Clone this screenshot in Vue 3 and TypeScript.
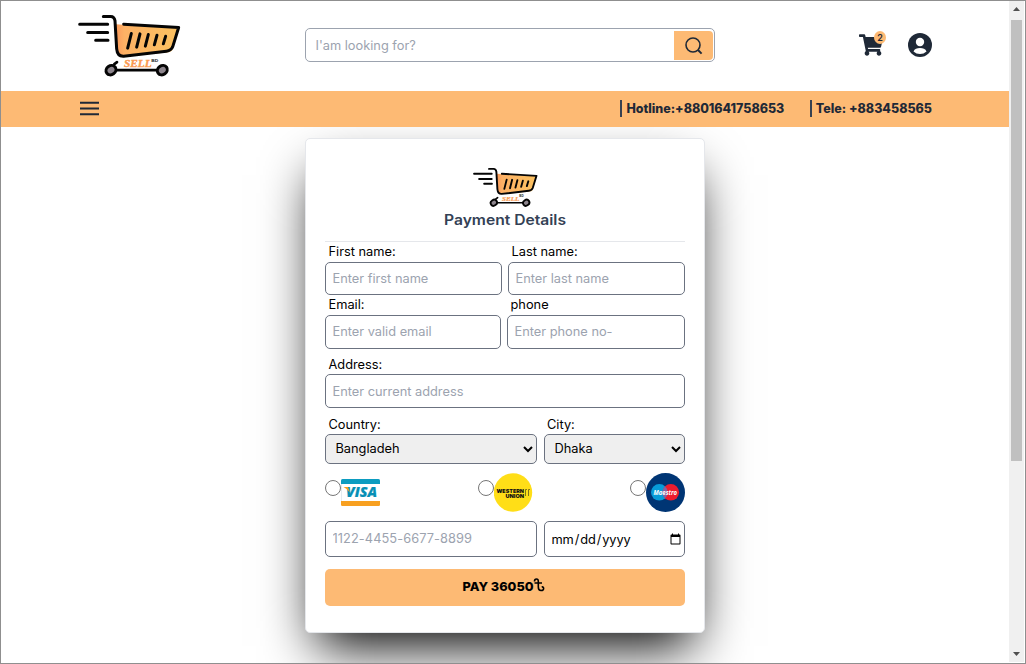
<script setup lang="ts">
import { ref } from 'vue'

interface Contact {
  label: string
  kind: string
}

const contacts: Contact[] = [
  { label: 'Hotline:+8801641758653', kind: 'hotline' },
  { label: 'Tele: +883458565', kind: 'tele' },
]
const cartCount = ref(2)
const total = ref(36050)
const country = ref('Bangladeh')
const city = ref('Dhaka')
const method = ref('')
</script>

<template>
  <div class="window">
    <svg class="defs" aria-hidden="true">
      <defs>
        <linearGradient id="basket" x1="0" y1="0" x2="1" y2="0">
          <stop offset="0" stop-color="#fb9a5c" />
          <stop offset="0.14" stop-color="#fdb165" />
          <stop offset="1" stop-color="#fbc160" />
        </linearGradient>
        <symbol id="logo" viewBox="50 40 315 195">
          <path d="M166 72L356 84L336 150Q332 156 320 157L190 169Q174 170 170 154Z" fill="url(#basket)" />
          <g fill="none" stroke="#050505" stroke-width="9" stroke-linecap="round" stroke-linejoin="round">
            <path d="M58 72H142M82 97H142M106 120H143" />
            <path d="M129 49H151Q162 49 164 62L169 146Q171 169 190 168L318 153Q333 151 337 140L355 82L190 72" />
            <path d="M213 100L202 144M239 101L229 141M264 103L255 138M290 105L282 134M316 108L309 131" />
            <path d="M162 192L170 186M168 210H290" stroke-width="8" />
          </g>
          <g fill="#8d858d" stroke="#050505" stroke-width="9">
            <ellipse cx="152" cy="210" rx="15.500" ry="13.500" transform="rotate(-35 152 210)" />
            <ellipse cx="306" cy="210" rx="15.500" ry="13.500" transform="rotate(-35 306 210)" />
          </g>
          <text x="191" y="202" textLength="83" lengthAdjust="spacingAndGlyphs" class="logo-name">SELL</text>
          <text x="273" y="185" textLength="21" lengthAdjust="spacingAndGlyphs" class="logo-bd">BD</text>
        </symbol>
      </defs>
    </svg>

    <div class="page">
      <header class="top">
        <svg class="brand"><use href="#logo" /></svg>
        <div class="search">
          <input type="text" placeholder="I'am looking for?" />
          <button type="button" aria-label="Search">
            <svg width="20" height="20" viewBox="0 0 20 20" fill="none" stroke="#1f2937" stroke-width="1.6">
              <circle cx="9" cy="9" r="7" />
              <path d="M14 14L17.6 17.6" stroke-width="2" />
            </svg>
          </button>
        </div>
        <div class="actions">
          <div class="cart">
            <svg width="24" height="22" viewBox="0 0 576 512" fill="#1f2937">
              <path d="M528.12 301.319l47.273-208C578.806 78.301 567.391 64 551.99 64H159.208l-9.166-44.81C147.758 8.021 137.93 0 126.529 0H24C10.745 0 0 10.745 0 24v16c0 13.255 10.745 24 24 24h69.883l70.248 343.435C147.325 417.1 136 435.222 136 456c0 30.928 25.072 56 56 56s56-25.072 56-56c0-15.674-6.447-29.835-16.824-40h209.647C430.447 426.165 424 440.326 424 456c0 30.928 25.072 56 56 56s56-25.072 56-56c0-22.172-12.888-41.332-31.579-50.405l5.517-24.276c3.413-15.018-8.002-29.319-23.403-29.319H218.117l-6.545-32h293.145c11.206 0 20.92-7.754 23.403-18.681z" />
            </svg>
            <span class="badge">{{ cartCount }}</span>
          </div>
          <svg width="24" height="24" viewBox="0 0 24 24">
            <circle cx="12" cy="12" r="12" fill="#1f2937" />
            <circle cx="12" cy="9" r="4.2" fill="#fff" />
            <path d="M5.5 18.4C6.5 15.8 9 15 12 15s5.500.8 6.500 3.400A9.400 9.400 0 0 1 5.500 18.400Z" fill="#fff" />
          </svg>
        </div>
      </header>

      <nav class="bar">
        <svg width="20" height="16" viewBox="0 0 20 16" stroke="#1f2937" stroke-width="2">
          <path d="M0 1.700H19M0 7.500H19M0 13.300H19" />
        </svg>
        <div class="contacts">
          <span v-for="c in contacts" :key="c.kind" class="contact" :class="c.kind">{{ c.label }}</span>
        </div>
      </nav>

      <main>
        <form class="card" @submit.prevent>
          <div class="card-head">
            <svg class="card-logo"><use href="#logo" /></svg>
            <h2>
              <svg width="124" height="20"><text x="1" y="14" textLength="122" lengthAdjust="spacingAndGlyphs">Payment Details</text></svg>
            </h2>
          </div>

          <div class="row names">
            <label><span>First name:</span><input type="text" placeholder="Enter first name" /></label>
            <label><span>Last name:</span><input type="text" placeholder="Enter last name" /></label>
          </div>
          <div class="row reach">
            <label><span>Email:</span><input type="email" placeholder="Enter valid email" /></label>
            <label><span>phone</span><input type="text" placeholder="Enter phone no-" /></label>
          </div>
          <div class="row address">
            <label><span>Address:</span><input type="text" placeholder="Enter current address" /></label>
          </div>
          <div class="row place">
            <label><span>Country:</span><select v-model="country"><option>Bangladeh</option></select></label>
            <label><span>City:</span><select v-model="city"><option>Dhaka</option></select></label>
          </div>

          <div class="methods">
            <label>
              <input v-model="method" type="radio" value="visa" />
              <svg width="39" height="39" viewBox="0 0 39 39">
                <rect y="6" width="39" height="27" rx="1.500" fill="#e3ebef" />
                <rect x="1" y="10" width="38" height="18" fill="#fff" />
                <path d="M0 11V7.500Q0 6 1.500 6H37.500Q39 6 39 7.500V11Z" fill="#0c9cc0" />
                <path d="M0 28H39V31.500Q39 33 37.500 33H1.500Q0 33 0 31.500Z" fill="#f8a020" />
                <text x="5" y="24.300" textLength="31" lengthAdjust="spacingAndGlyphs" class="visa">VISA</text>
                <path d="M2.500 14H7L9 19.500Q6.500 16 2.500 14Z" fill="#f8a020" />
              </svg>
            </label>
            <label>
              <input v-model="method" type="radio" value="western-union" />
              <svg width="39" height="39" viewBox="0 0 39 39">
                <circle cx="19" cy="19.500" r="19.200" fill="#ffde17" />
                <text x="2.500" y="20.300" textLength="27.500" lengthAdjust="spacingAndGlyphs" class="wu">WESTERN</text>
                <text x="11.500" y="24.600" textLength="18.500" lengthAdjust="spacingAndGlyphs" class="wu">UNION</text>
                <path d="M31.500 23V16.500H33M34.500 23V16.500H36" fill="none" stroke="#4c4515" stroke-width=".7" />
              </svg>
            </label>
            <label>
              <input v-model="method" type="radio" value="maestro" />
              <svg width="39" height="39" viewBox="0 0 39 39">
                <circle cx="19.500" cy="19.500" r="19.500" fill="#003574" />
                <circle cx="13.300" cy="19.300" r="8.300" fill="#079bd8" />
                <circle cx="24.800" cy="19.300" r="8.300" fill="#ed1c2e" />
                <path d="M19.050 13.300A8.300 8.300 0 0 1 19.050 25.300A8.300 8.300 0 0 1 19.050 13.300Z" fill="#8763a0" />
                <text x="7.500" y="21.800" textLength="23.500" lengthAdjust="spacingAndGlyphs" class="maestro">Maestro</text>
              </svg>
            </label>
          </div>

          <div class="row payment">
            <input type="text" placeholder="1122-4455-6677-8899" />
            <input type="date" />
          </div>

          <button type="submit" class="pay">
            <svg width="86" height="20">
              <text x="0.500" y="14" textLength="71" lengthAdjust="spacingAndGlyphs">PAY {{ total }}</text>
              <path d="M72.500 4.500Q72.500 2 74.500 2Q76.300 2 76.300 4.200V10Q76.300 13.500 79 13.500Q82 13.500 81.600 11Q81.200 9.600 79.700 10M72.500 6H80" fill="none" stroke="#000" stroke-width="1.600" />
            </svg>
          </button>
        </form>
      </main>
    </div>

    <div class="scrollbar">
      <svg width="15" height="19" viewBox="0 0 15 19"><path d="M4 10L7.500 6L11 10Z" fill="#505050" /></svg>
      <div class="thumb"></div>
      <svg class="down" width="15" height="17" viewBox="0 0 15 17"><path d="M4 7L7.500 11L11 7Z" fill="#505050" /></svg>
    </div>
  </div>
</template>

<style>
body {
  background: #fff;
  overflow: hidden;
}
</style>

<style scoped>
* {
  box-sizing: border-box;
}
.window {
  display: flex;
  width: 1026px;
  height: 664px;
  border: 1px solid #8f8f8f;
  overflow: hidden;
  background: #fff;
  font-family: Inter, "Liberation Sans", sans-serif;
  font-size: 12.8px;
  color: #000;
}
.defs {
  position: absolute;
  width: 0;
  height: 0;
}
.page {
  width: 1008px;
  height: 662px;
  overflow: hidden;
}
.logo-name {
  font: italic bold 29px "Liberation Serif", serif;
  fill: #fb9a50;
  stroke: #fb9a50;
  stroke-width: 1px;
}
.logo-bd {
  font: bold 13px "Liberation Sans", sans-serif;
  fill: #222;
}
.top {
  display: flex;
  align-items: flex-start;
  height: 90px;
  padding: 12px 77px 0 76px;
}
.brand {
  width: 105px;
  height: 66px;
}
.search {
  display: flex;
  width: 410px;
  height: 34px;
  margin: 15px 0 0 123px;
  padding: 2px 1px 2px 0;
  border: 1px solid #9ca3af;
  border-radius: 5px;
}
.search input {
  flex: 1;
  min-width: 0;
  padding: 0 0 0 9.5px;
  border: 0;
  outline: 0;
  background: transparent;
}
.search button {
  display: flex;
  align-items: center;
  justify-content: center;
  width: 39px;
  height: 29px;
  padding: 0;
  border: 0;
  border-radius: 0 4px 4px 0;
  background: #fdba74;
}
.actions {
  display: flex;
  align-items: center;
  gap: 25px;
  margin: 20px 0 0 auto;
}
.cart {
  position: relative;
  display: flex;
}
.badge {
  position: absolute;
  top: -3px;
  left: 15px;
  width: 12px;
  height: 13px;
  border-radius: 50%;
  background: #fdba74;
  color: #1f2937;
  font-size: 9px;
  font-weight: 600;
  line-height: 13px;
  text-align: center;
}
.bar {
  position: relative;
  z-index: 1;
  display: flex;
  align-items: center;
  justify-content: space-between;
  height: 36px;
  padding: 0 77px 0 79px;
  background: #fdba74;
}
.contacts {
  display: flex;
  gap: 25.5px;
  margin-bottom: 1px;
}
.contact {
  height: 17px;
  padding-left: 4px;
  border-left: 2px solid #374151;
  color: #1f2937;
  font-weight: 800;
  font-size: 12.5px;
  line-height: 17px;
  white-space: nowrap;
}
.hotline {
  letter-spacing: -0.02px;
}
main {
  padding: 11px 0 0 304px;
}
.card {
  width: 400px;
  height: 495px;
  padding: 28px 19px 0;
  border: 1px solid #e5e7eb;
  border-radius: 5px;
  background: #fff;
  box-shadow: 0 25px 50px -12px #000;
}
.card-head {
  display: flex;
  flex-direction: column;
  align-items: center;
  height: 75px;
  border-bottom: 1px solid #e5e7eb;
}
.card-logo {
  width: 67px;
  height: 41px;
}
h2 {
  display: flex;
  margin: 3px 0 0;
}
h2 text {
  font: 600 14.2px Inter, sans-serif;
  fill: #334155;
}
.row {
  display: grid;
}
.row label {
  display: block;
  min-width: 0;
}
.row span {
  display: block;
  height: 20px;
  padding-left: 3.5px;
  line-height: 21px;
}
.names span,
.reach span {
  line-height: 19px;
}
.row input,
.row select {
  display: block;
  width: 100%;
  border: 1px solid #6b7280;
  border-radius: 5px;
  background-color: #fff;
  outline: 0;
}
input,
select {
  margin: 0;
  font: 12.8px Inter, "Liberation Sans", sans-serif;
  color: #000;
}
.row input {
  height: 34px;
  padding: 0 6.5px;
}
::placeholder {
  color: #9ca3af;
}
.names {
  grid-template-columns: 177px 177px;
  column-gap: 6px;
}
.names input {
  height: 33px;
}
.reach {
  grid-template-columns: 176px 178px;
  column-gap: 6px;
}
.reach input {
  padding-bottom: 1px;
}
.address {
  margin-top: 5px;
}
.place,
.payment {
  grid-template-columns: 212px 141px;
  column-gap: 7px;
}
.place {
  margin-top: 6px;
}
.row select {
  height: 30px;
  padding: 0 0 1px 5.5px;
  background-color: #efefef;
}
.place label:last-child span {
  padding-left: 3px;
}
.methods {
  display: flex;
  justify-content: space-between;
  margin-top: 9px;
}
.methods label {
  display: flex;
  height: 39px;
}
.methods input {
  width: 16px;
  height: 16px;
  margin-top: 7px;
}
.visa {
  font: italic 800 13.5px "Open Sans", sans-serif;
  fill: #078fb5;
  stroke: #078fb5;
  stroke-width: 0.2px;
}
.wu {
  font: 900 5px Inter, sans-serif;
  fill: #111;
}
.maestro {
  font: italic bold 6.6px "Open Sans", sans-serif;
  fill: #fff;
}
.payment {
  margin-top: 9px;
}
.row.payment input {
  height: 36px;
  padding-bottom: 1px;
  letter-spacing: 0.08px;
}
.row.payment input[type='date'] {
  padding: 0 0 0 5.5px;
  letter-spacing: -0.1px;
}
.pay {
  display: flex;
  justify-content: center;
  width: 100%;
  height: 37px;
  margin-top: 12px;
  padding: 8px 0 0;
  border: 0;
  border-radius: 5px;
  background: #fdba74;
}
.pay text {
  font: 800 12.3px Inter, sans-serif;
}
.scrollbar {
  display: flex;
  flex-direction: column;
  width: 15px;
  height: 661px;
  background: #f0f0f0;
}
.thumb {
  width: 11px;
  height: 441px;
  margin-left: 2px;
  background: #c0c0c0;
}
.down {
  margin-top: auto;
}
</style>
